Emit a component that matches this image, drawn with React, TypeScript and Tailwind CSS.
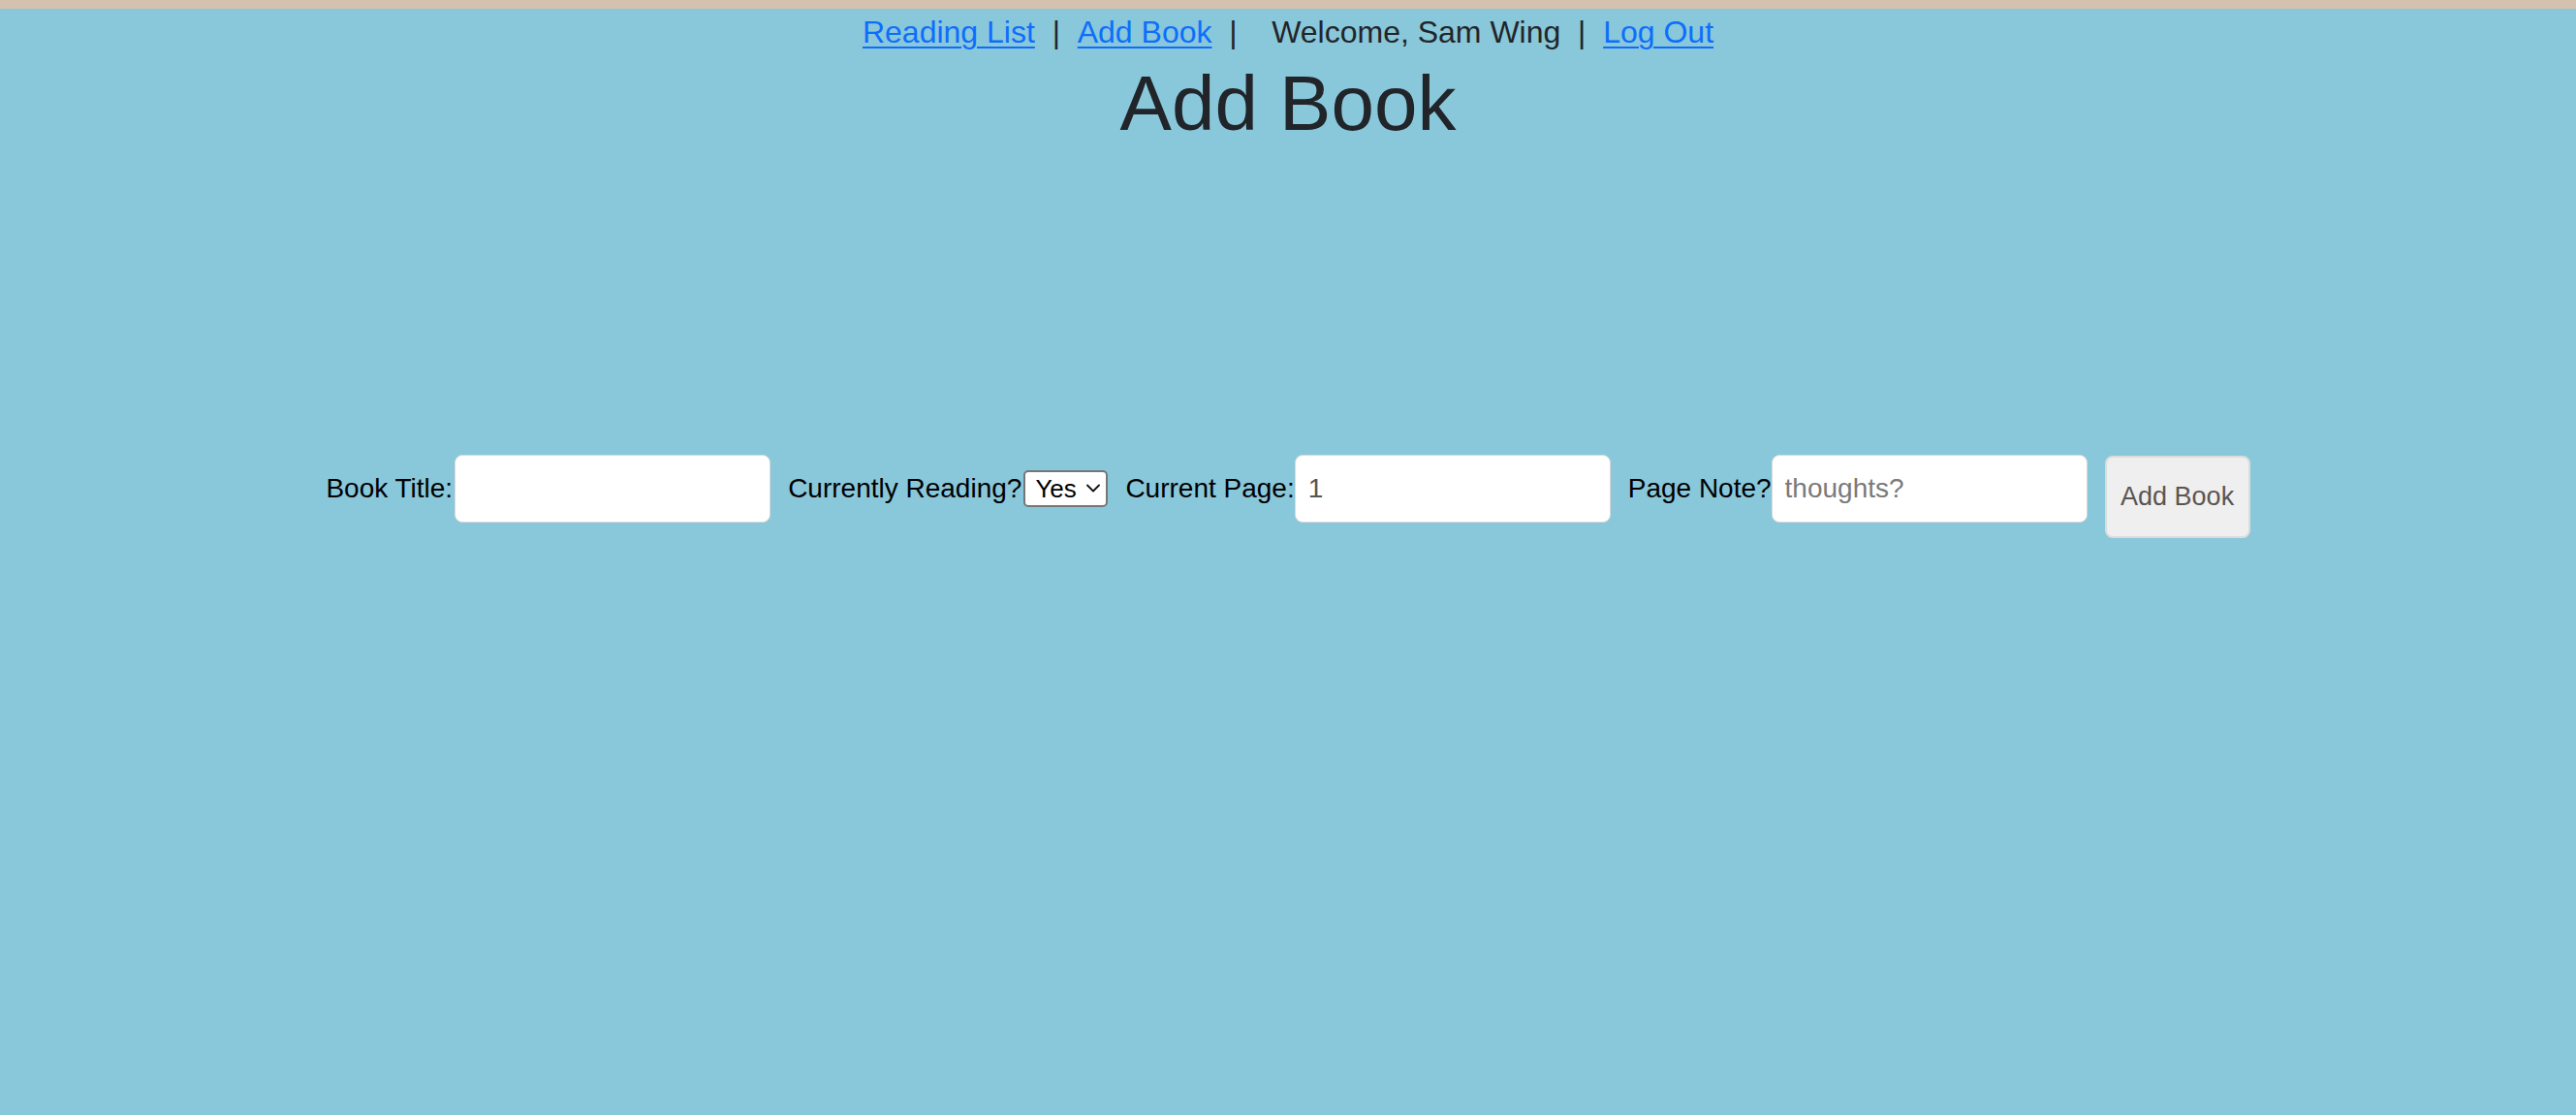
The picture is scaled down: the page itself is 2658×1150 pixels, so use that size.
import { useState } from "react";

function ChevronDown() {
  return (
    <svg width="14" height="9" viewBox="0 0 14 9" fill="none" className="pointer-events-none absolute right-[8px] top-[14px]">
      <path d="M1 1.5 7 7.5 13 1.5" stroke="#111" strokeWidth="1.8" strokeLinecap="round" strokeLinejoin="round" />
    </svg>
  );
}

export default function App() {
  const [title, setTitle] = useState("");
  const [reading, setReading] = useState("yes");
  const [page, setPage] = useState("1");
  const [note, setNote] = useState("");

  const inputClass =
    "h-[70px] w-[326px] rounded-[8px] border border-[#d9d9d9] bg-white px-[13px] text-[28px] text-[#555] placeholder:text-[#7a7a7a] outline-none";

  return (
    <div className="min-h-[1150px] bg-[#89c7da] font-['Liberation_Sans',Arial,sans-serif]">
      <div className="h-[9px] bg-[#d4c2ae]" />

      <nav className="text-center text-[32px] leading-[48px] text-[#212529]">
        <a href="#" className="text-[#0d6efd] underline decoration-[2px] underline-offset-[4px]">
          Reading List
        </a>
        <span>&nbsp; | &nbsp;</span>
        <a href="#" className="text-[#0d6efd] underline decoration-[2px] underline-offset-[4px]">
          Add Book
        </a>
        <span>&nbsp; | &nbsp;&nbsp; Welcome, Sam Wing &nbsp;| &nbsp;</span>
        <a href="#" className="text-[#0d6efd] underline decoration-[2px] underline-offset-[4px]">
          Log Out
        </a>
      </nav>

      <h1 className="mt-[2px] text-center text-[80px] leading-[96px] font-normal text-[#212529]">Add Book</h1>

      <form
        className="mt-[314px] flex items-start justify-center gap-[18px] text-[28px] leading-[70px] text-black"
        onSubmit={(e) => e.preventDefault()}
      >
        <div className="flex items-start">
          <label htmlFor="title">Book Title:</label>
          <input id="title" className={`ml-[2px] ${inputClass}`} value={title} onChange={(e) => setTitle(e.target.value)} />
        </div>

        <div className="flex items-start">
          <label htmlFor="reading">Currently Reading?</label>
          <div className="relative ml-[2px] mt-[16px] h-[38px] leading-none">
            <select
              id="reading"
              value={reading}
              onChange={(e) => setReading(e.target.value)}
              className="block h-[38px] w-[87px] appearance-none rounded-[5px] border-2 border-[#767676] bg-white pl-[10px] text-[26px] leading-[34px] text-black outline-none"
            >
              <option value="yes">Yes</option>
              <option value="no">No</option>
            </select>
            <ChevronDown />
          </div>
        </div>

        <div className="flex items-start">
          <label htmlFor="page">Current Page:</label>
          <input id="page" className={inputClass} value={page} onChange={(e) => setPage(e.target.value)} />
        </div>

        <div className="flex items-start">
          <label htmlFor="note">Page Note?</label>
          <input
            id="note"
            placeholder="thoughts?"
            className={inputClass}
            value={note}
            onChange={(e) => setNote(e.target.value)}
          />
        </div>

        <button
          type="submit"
          className="mt-[1px] h-[85px] w-[150px] rounded-[8px] border-2 border-[#dcdcdc] bg-[#efefef] text-[27px] leading-none text-[#5b5552]"
        >
          Add Book
        </button>
      </form>
    </div>
  );
}
